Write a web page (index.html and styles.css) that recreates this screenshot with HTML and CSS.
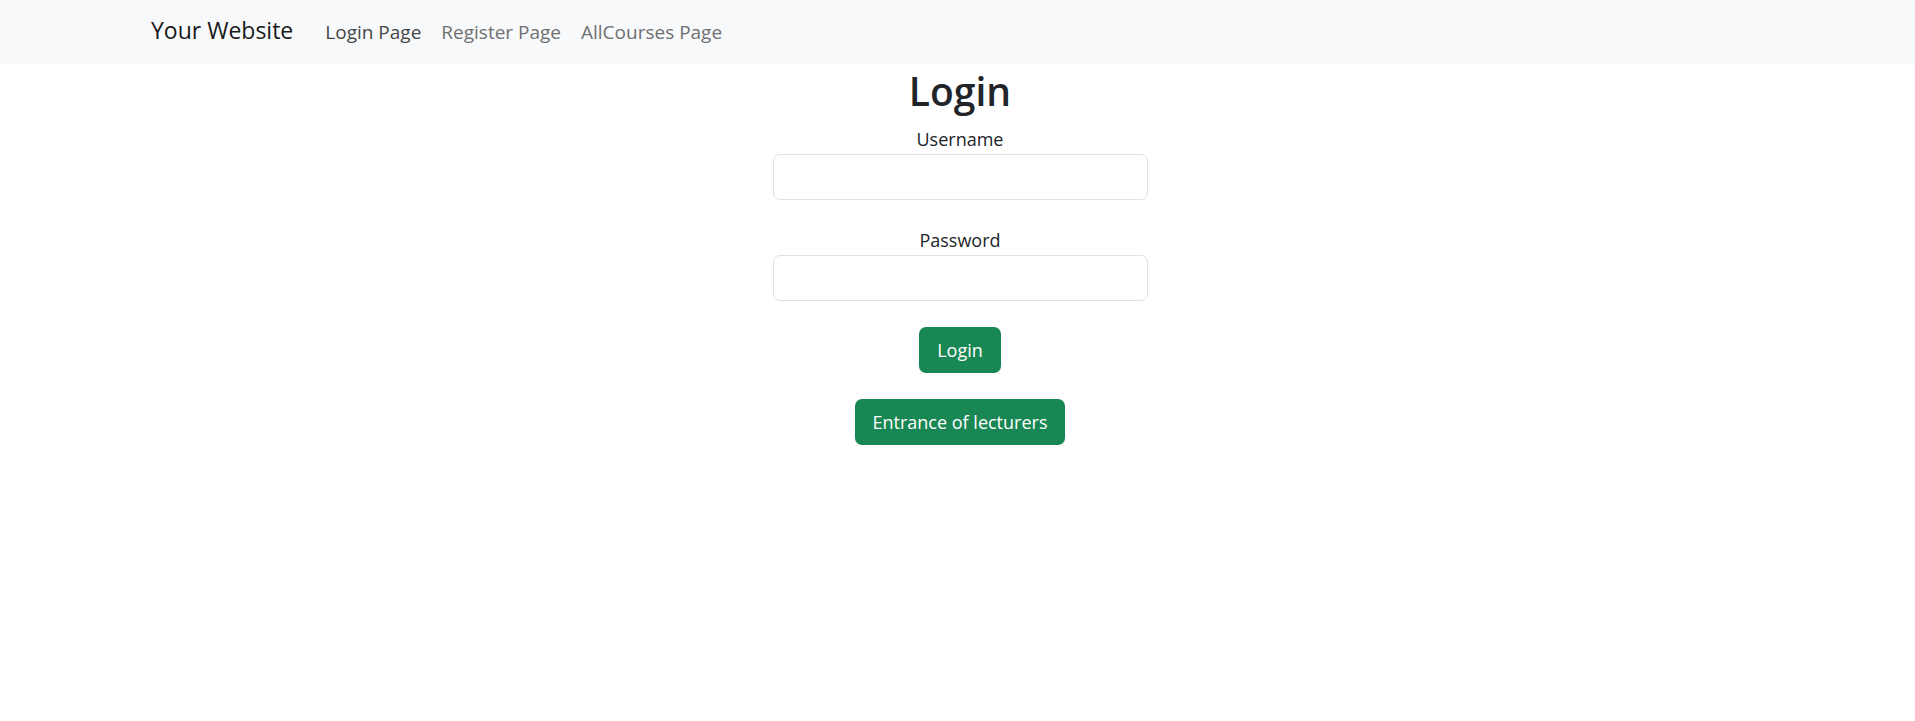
FILE: index.html
```html
<!DOCTYPE html>
<html lang="en">
<head>
<meta charset="utf-8">
<title>Login</title>
<link rel="stylesheet" href="styles.css">
</head>
<body>
<nav class="navbar">
  <a class="brand" href="#">Your Website</a>
  <ul class="nav">
    <li><a class="nav-link active" href="#">Login Page</a></li>
    <li><a class="nav-link" href="#">Register Page</a></li>
    <li><a class="nav-link" href="#">AllCourses Page</a></li>
  </ul>
</nav>
<main class="main">
  <h1 class="title">Login</h1>
  <form class="form">
    <div class="field">
      <label class="label" for="username">Username</label>
      <input class="input" id="username" type="text">
    </div>
    <div class="field">
      <label class="label" for="password">Password</label>
      <input class="input" id="password" type="password">
    </div>
    <button class="btn" type="button">Login</button>
  </form>
  <button class="btn" type="button">Entrance of lecturers</button>
</main>
</body>
</html>
```

FILE: styles.css
```css
* { box-sizing: border-box; }
html, body { margin: 0; padding: 0; background: #fff; }
body {
  font-family: "Open Sans", "Noto Sans", sans-serif;
  color: #212529;
}

.navbar {
  height: 64px;
  background: #f8f9fa;
  display: flex;
  align-items: baseline;
  padding: 12px 0 0 151px;
}
.brand {
  font-size: 23px;
  line-height: 36px;
  color: #191919;
  text-decoration: none;
  margin-right: 22px;
}
.nav {
  display: flex;
  list-style: none;
  margin: 0;
  padding: 0;
}
.nav-link {
  display: block;
  font-size: 19px;
  line-height: 36px;
  padding: 0 10px;
  color: #6f7071;
  text-decoration: none;
}
.nav-link.active { color: #454647; }

.main {
  display: flex;
  flex-direction: column;
  align-items: center;
  padding-left: 5px;
}
.title {
  font-size: 39px;
  font-weight: 600;
  line-height: 47px;
  margin: 3px 0 11px;
}
.form {
  display: flex;
  flex-direction: column;
  align-items: center;
}
.field {
  display: flex;
  flex-direction: column;
  align-items: center;
  margin-bottom: 26px;
}
.label {
  font-size: 18px;
  line-height: 29px;
}
.input {
  width: 375px;
  height: 46px;
  border: 1px solid #dee2e6;
  border-radius: 7px;
  background: #fff;
  font: inherit;
  padding: 0 14px;
}
.btn {
  height: 46px;
  padding: 0 18px;
  border: none;
  border-radius: 7px;
  background: #198754;
  color: #fff;
  font-family: "Open Sans", "Noto Sans", sans-serif;
  font-size: 18px;
  margin-bottom: 26px;
  cursor: pointer;
}
.form .btn { margin-top: 0; }
```
